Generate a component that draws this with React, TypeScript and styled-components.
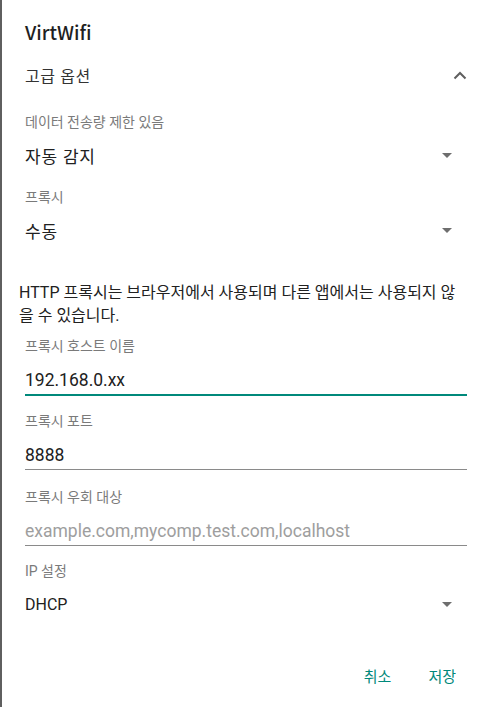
import React from 'react';
import styled, { createGlobalStyle } from 'styled-components';

const GlobalStyle = createGlobalStyle`
  html, body {
    margin: 0;
    padding: 0;
    background: #ffffff;
  }
  body {
    font-family: Roboto, "Noto Sans CJK KR", sans-serif;
    color: #212121;
  }
`;

const Dialog = styled.div`
  width: 487px;
  height: 707px;
  box-sizing: border-box;
  border-left: 2px solid #5f5f5f;
  background: #ffffff;
  display: flex;
  flex-direction: column;
  overflow: hidden;
`;

const Title = styled.h1`
  margin: 0;
  padding: 18px 0 0 23px;
  height: 51px;
  box-sizing: border-box;
  font-family: "Noto Sans CJK KR", "Noto Sans", sans-serif;
  font-size: 19px;
  font-weight: 500;
  line-height: 28px;
  color: #1f1f1f;
`;

const Body = styled.div`
  padding: 0 20px 0 23px;
  display: flex;
  flex-direction: column;
`;

const AdvancedRow = styled.div`
  height: 48px;
  display: flex;
  align-items: center;
  justify-content: space-between;
  font-size: 16px;
  letter-spacing: 0.6px;
  color: #333333;
`;

const Label = styled.div<{ $top: number }>`
  margin-top: ${(p) => p.$top}px;
  height: 18px;
  line-height: 18px;
  font-size: 14px;
  color: #7a7a7a;
`;

const Spinner = styled.div<{ $size?: number }>`
  height: 48px;
  display: flex;
  align-items: center;
  justify-content: space-between;
  font-size: ${(p) => p.$size ?? 16}px;
  letter-spacing: ${(p) => (p.$size ? 0.8 : 0)}px;
  color: #212121;
  padding-right: 15px;
`;

const Triangle = styled.span`
  width: 0;
  height: 0;
  border-left: 5px solid transparent;
  border-right: 5px solid transparent;
  border-top: 5px solid #6e6e6e;
`;

const Note = styled.p`
  margin: 27px 0 0 -6px;
  font-size: 16px;
  line-height: 23px;
  color: #212121;
`;

const Field = styled.div<{ $focused?: boolean; $placeholder?: boolean }>`
  height: ${(p) => (p.$focused ? 41 : 40)}px;
  box-sizing: border-box;
  display: flex;
  align-items: flex-end;
  padding-bottom: 2px;
  font-size: 17.5px;
  line-height: 24px;
  color: ${(p) => (p.$placeholder ? '#9e9e9e' : '#212121')};
  border-bottom: ${(p) => (p.$focused ? '2px solid #00897b' : '1px solid #8a8a8a')};
`;

const Footer = styled.div`
  margin-top: auto;
  height: 64px;
  box-sizing: border-box;
  display: flex;
  justify-content: flex-end;
  align-items: flex-start;
  gap: 37px;
  padding: 24px 31px 0 0;
`;

const TextButton = styled.button`
  border: none;
  background: none;
  padding: 0;
  font-family: Roboto, "Noto Sans CJK KR", sans-serif;
  font-size: 15px;
  line-height: 20px;
  color: #00897b;
  cursor: pointer;
`;

const ChevronUp = () => (
  <svg width="14" height="9" viewBox="0 0 14 9">
    <path d="M1.5 7.5 L7 2 L12.5 7.5" fill="none" stroke="#5f5f5f" strokeWidth="2" />
  </svg>
);

const App: React.FC = () => {
  return (
    <>
      <GlobalStyle />
      <Dialog>
        <Title>VirtWifi</Title>
        <Body>
          <AdvancedRow>
            고급 옵션
            <ChevronUp />
          </AdvancedRow>

          <Label $top={14}>데이터 전송량 제한 있음</Label>
          <Spinner $size={17}>
            자동 감지
            <Triangle />
          </Spinner>

          <Label $top={9}>프록시</Label>
          <Spinner $size={17}>
            수동
            <Triangle />
          </Spinner>

          <Note>HTTP 프록시는 브라우저에서 사용되며 다른 앱에서는 사용되지 않을 수 있습니다.</Note>

          <Label $top={10}>프록시 호스트 이름</Label>
          <Field $focused>192.168.0.xx</Field>

          <Label $top={16}>프록시 포트</Label>
          <Field>8888</Field>

          <Label $top={18}>프록시 우회 대상</Label>
          <Field $placeholder>example.com,mycomp.test.com,localhost</Field>

          <Label $top={16}>IP 설정</Label>
          <Spinner>
            DHCP
            <Triangle />
          </Spinner>
        </Body>
        <Footer>
          <TextButton>취소</TextButton>
          <TextButton>저장</TextButton>
        </Footer>
      </Dialog>
    </>
  );
};

export default App;
